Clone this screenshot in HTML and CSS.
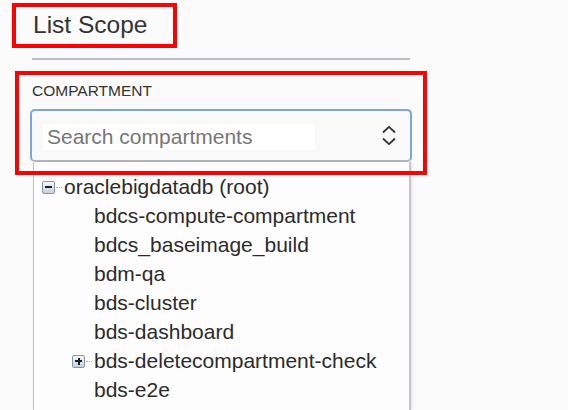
FILE: index.html
```html
<!DOCTYPE html>
<html lang="en">
<head>
<meta charset="utf-8">
<title>List Scope</title>
<link rel="stylesheet" href="styles.css">
</head>
<body>
<div class="page">
  <div class="title-box">
    <h2 class="title">List Scope</h2>
  </div>
  <div class="rule"></div>
  <div class="field-box">
    <div class="field-label">COMPARTMENT</div>
    <div class="select">
      <div class="search"><span class="placeholder">Search compartments</span></div>
      <svg class="chevron" width="16" height="22" viewBox="0 0 16 22" aria-hidden="true">
        <path d="M2.5 7 L8 1.8 L13.5 7" fill="none" stroke="#333" stroke-width="1.8" stroke-linecap="round" stroke-linejoin="round"/>
        <path d="M2.5 14 L8 19.2 L13.5 14" fill="none" stroke="#333" stroke-width="1.8" stroke-linecap="round" stroke-linejoin="round"/>
      </svg>
    </div>
    <div class="dropdown">
      <div class="row lvl0">
        <span class="toggle minus"></span><span class="dots"></span>
        <span class="name">oraclebigdatadb (root)</span>
      </div>
      <div class="row lvl1"><span class="spacer"></span><span class="name">bdcs-compute-compartment</span></div>
      <div class="row lvl1"><span class="spacer"></span><span class="name">bdcs_baseimage_build</span></div>
      <div class="row lvl1"><span class="spacer"></span><span class="name">bdm-qa</span></div>
      <div class="row lvl1"><span class="spacer"></span><span class="name">bds-cluster</span></div>
      <div class="row lvl1"><span class="spacer"></span><span class="name">bds-dashboard</span></div>
      <div class="row lvl1">
        <span class="toggle plus"></span><span class="dots"></span>
        <span class="name">bds-deletecompartment-check</span>
      </div>
      <div class="row lvl1"><span class="spacer"></span><span class="name">bds-e2e</span></div>
    </div>
  </div>
</div>
</body>
</html>
```

FILE: styles.css
```css
html, body {
  margin: 0;
  padding: 0;
  background: #fbfbfb;
}

body {
  font-family: "Liberation Sans", Arial, sans-serif;
  color: #333;
  height: 410px;
  overflow: hidden;
}

.page {
  display: flex;
  flex-direction: column;
  align-items: flex-start;
  padding-top: 3px;
}

.title-box {
  margin-left: 12px;
  width: 165px;
  height: 45px;
  box-sizing: border-box;
  border: 4px solid #ff0000;
  padding: 4px 0 0 17px;
}

.title {
  margin: 0;
  font-weight: normal;
  font-size: 24.5px;
  line-height: 28px;
  color: #333;
  white-space: nowrap;
}

.rule {
  margin-top: 10px;
  margin-left: 32px;
  width: 378px;
  height: 2px;
  background: #babec5;
}

.field-box {
  position: relative;
  margin-top: 11px;
  margin-left: 15px;
  width: 412px;
  height: 104px;
  box-sizing: border-box;
  padding: 11px 15px 0 15px;
}

.field-box::after {
  content: "";
  position: absolute;
  inset: 0;
  border: 4px solid #ff0000;
  z-index: 3;
  pointer-events: none;
}

.field-label {
  font-size: 15.5px;
  line-height: 18px;
  padding-left: 2px;
  color: #333;
  margin-bottom: 9px;
}

.select {
  display: flex;
  align-items: center;
  justify-content: space-between;
  height: 53px;
  box-sizing: border-box;
  border: 2px solid #7ba7de;
  border-bottom-color: #b4b9c1;
  border-radius: 5px;
  background: #f9f9f9;
  padding: 3px 13px 0 11px;
}

.search {
  width: 272px;
  height: 26px;
  background: #ffffff;
  display: flex;
  align-items: center;
}

.placeholder {
  font-size: 21px;
  line-height: 26px;
  color: #767676;
  padding-left: 4px;
  white-space: nowrap;
}

.chevron {
  display: block;
  margin-top: -2px;
}

.dropdown {
  position: absolute;
  top: 91px;
  left: 18px;
  width: 378px;
  height: 248px;
  overflow: hidden;
  box-sizing: border-box;
  border: 1px solid #c2c6cc;
  border-right-width: 2px;
  border-top: none;
  border-bottom: none;
  background: #fdfdfd;
  box-shadow: 1px 0 3px rgba(0, 0, 0, 0.1);
  padding-top: 10px;
  z-index: 2;
}

.row {
  display: flex;
  align-items: center;
  height: 29px;
  font-size: 21px;
  line-height: 29px;
  color: #2b2b2b;
  white-space: nowrap;
}

.lvl0 { padding-left: 8px; }
.lvl1 { padding-left: 38px; }

.spacer {
  width: 22px;
  flex: none;
}

.toggle {
  position: relative;
  flex: none;
  width: 13px;
  height: 13px;
  box-sizing: border-box;
  border: 1px solid #8696aa;
  border-radius: 2px;
  background: linear-gradient(#f6f8fb, #c6d0dc);
  margin-top: 1px;
}

.toggle::before {
  content: "";
  position: absolute;
  left: 2px;
  right: 2px;
  top: 4.5px;
  height: 2px;
  background: #1e1e1e;
}

.plus::after {
  content: "";
  position: absolute;
  top: 2px;
  bottom: 2px;
  left: 4.5px;
  width: 2px;
  background: #1e1e1e;
}

.dots {
  flex: none;
  width: 6px;
  margin-left: 1px;
  margin-right: 2px;
  border-top: 1px dotted #b0b0b0;
  margin-top: 1px;
}

.name {
  display: block;
}
```
